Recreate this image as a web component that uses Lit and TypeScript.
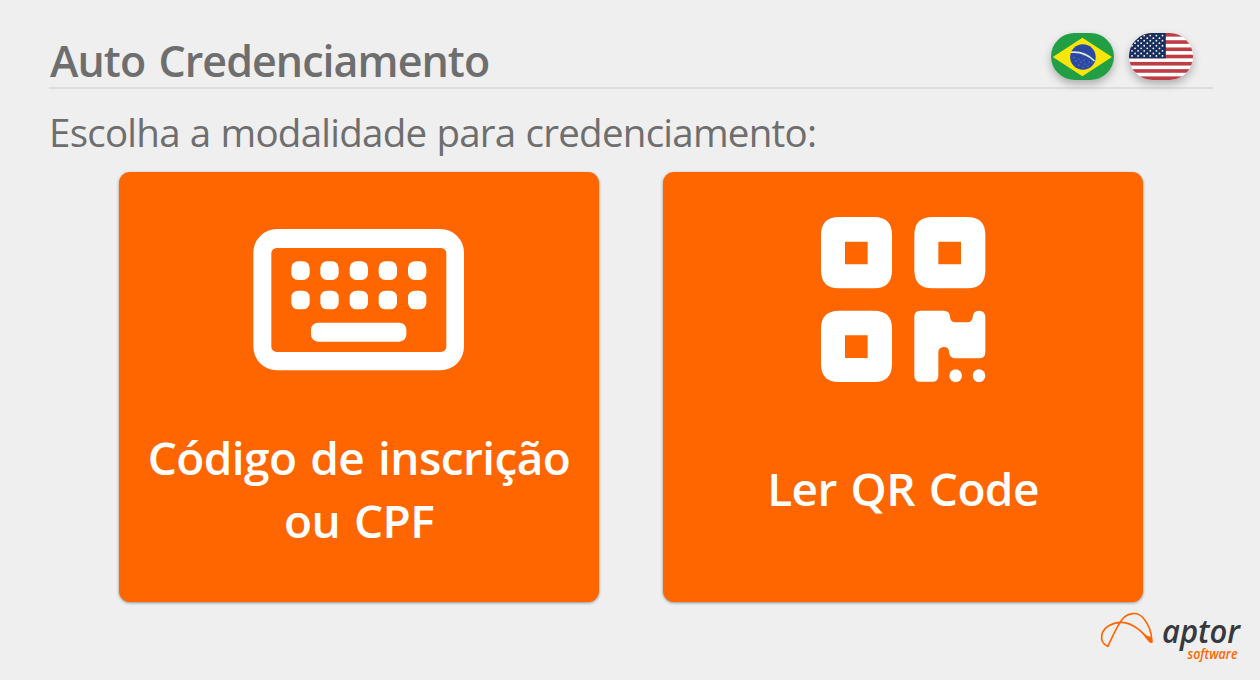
import { LitElement, html, css, svg } from 'lit';
import { customElement, property } from 'lit/decorators.js';

const KEY_COLUMNS = [153, 240, 328, 415, 503];
const KEY_ROWS = [138, 226];

const keyboardIcon = html`
  <svg width="212" height="142" viewBox="38 41 636 426" fill="#fff">
    <path
      fill-rule="evenodd"
      d="M110 41H600A71 71 0 0 1 671 112V394A71 71 0 0 1 600 465H110A71 71 0 0 1 39 394V112A71 71 0 0 1 110 41ZM109 98A16 16 0 0 0 93 114V395A16 16 0 0 0 109 410H602A16 16 0 0 0 618 395V114A16 16 0 0 0 602 98Z"
    />
    ${KEY_ROWS.map((y) =>
      KEY_COLUMNS.map((x) => svg`<rect x=${x} y=${y} width="55" height="56" rx="20" />`)
    )}
    <rect x="212" y="322" width="286" height="57" rx="21" />
  </svg>
`;

const qrIcon = html`
  <svg width="165" height="165" viewBox="33 36 495 495" fill="#fff">
    ${[
      [33, 36],
      [313, 36],
      [33, 317],
    ].map(
      ([x, y]) => svg`<path
        fill-rule="evenodd"
        transform="translate(${x} ${y})"
        d="M54 0H159Q213 0 213 54V160Q213 214 159 214H54Q0 214 0 160V54Q0 0 54 0ZM72 74V142H140V74Z"
      />`
    )}
    <path
      d="M331 317H401Q419 317 420 336Q421 352 437 352H471Q487 352 488 336Q490 317 507 317Q526 318 526 337V441Q526 460 507 460H437Q419 460 417 441Q417 426 401 426Q385 427 385 443V512Q385 530 367 530H331Q313 530 313 512V335Q313 317 331 317Z"
    />
    <circle cx="437" cy="512" r="19" />
    <circle cx="507" cy="512" r="19" />
  </svg>
`;

const brazilFlag = html`
  <svg width="64" height="47" viewBox="0 0 64 47">
    <rect width="64" height="47" fill="#229e45" />
    <path d="M1.8 24L31.4 4.7 61 24 31.4 43.2Z" fill="#f8e509" />
    <circle cx="31.9" cy="24" r="12.8" fill="#2b49a3" />
    <path d="M20 19.3Q33.5 18 43.5 28" fill="none" stroke="#dcebdc" stroke-width="1.6" />
    <g fill="#8fa3d6">
      <circle cx="23" cy="24.5" r=".5" />
      <circle cx="25" cy="28" r=".6" />
      <circle cx="28" cy="26" r=".5" />
      <circle cx="30" cy="29" r=".6" />
      <circle cx="28" cy="32" r=".6" />
      <circle cx="33" cy="27" r=".6" />
      <circle cx="34" cy="31" r=".6" />
      <circle cx="38" cy="29" r=".6" />
      <circle cx="37" cy="33" r=".6" />
      <circle cx="32" cy="34" r=".5" />
      <circle cx="41" cy="30" r=".5" />
      <circle cx="33" cy="22.5" r=".5" />
    </g>
  </svg>
`;

const STRIPE = 47 / 13;

const usaFlag = html`
  <svg width="64" height="47" viewBox="0 0 64 47">
    <rect width="64" height="47" fill="#fff" />
    ${[0, 2, 4, 6, 8, 10, 12].map(
      (i) => svg`<rect y=${i * STRIPE} width="64" height=${STRIPE} fill="#bd3d44" />`
    )}
    <rect width="36.8" height=${STRIPE * 7} fill="#192f5d" />
    ${Array.from({ length: 9 }, (_, row) =>
      Array.from(
        { length: row % 2 ? 5 : 6 },
        (_, col) =>
          svg`<circle cx=${3 + col * 6.1 + (row % 2 ? 3.05 : 0)} cy=${2.6 + row * 2.54} r=".9" fill="#fff" />`
      )
    )}
  </svg>
`;

const aptorLogo = html`
  <svg width="150" height="56" viewBox="1095 608 150 56" role="img" aria-label="aptor software">
    <g fill="none" stroke="#ff6600" stroke-linejoin="round" stroke-linecap="round">
      <path
        stroke-width="1.7"
        d="M1107.8 646.3C1103 644.5 1101 640 1101.8 635C1103.5 627 1113 622 1122 622.3C1134 622.8 1143 633 1151 641.5"
      />
      <path
        stroke-width="1.6"
        d="M1107.8 646.3C1111 640 1116 628 1121 621C1127 612 1138 611 1144 619C1149 625 1151.5 633 1152 641"
      />
    </g>
    <path fill="#ff6600" d="M1139 629.5C1144 634 1148 637 1150.5 636.5L1152.8 642.5Q1151 644 1148.5 641.5Z" />
    <text class="brand" x="1162" y="643" textLength="78" lengthAdjust="spacingAndGlyphs">aptor</text>
    <text class="sub" x="1187.5" y="659.3" textLength="50" lengthAdjust="spacingAndGlyphs">software</text>
  </svg>
`;

/**
 * Large touch tile: icon on top, label below.
 */
@customElement('option-card')
export class OptionCard extends LitElement {
  @property()
  label = '';

  static styles = css`
    :host {
      display: block;
      width: 480px;
      height: 430px;
    }

    .card {
      display: flex;
      flex-direction: column;
      align-items: center;
      width: 100%;
      height: 100%;
      box-sizing: border-box;
      padding: 0 20px;
      border: none;
      border-radius: 11px;
      background: #ff6600;
      box-shadow: 0 1px 3px rgba(0, 0, 0, 0.4);
      color: #fff;
      cursor: pointer;
    }

    .icon {
      display: flex;
      align-items: center;
      justify-content: center;
      height: 255px;
      flex-shrink: 0;
    }

    .label {
      display: flex;
      align-items: center;
      justify-content: center;
      height: 123px;
      font-family: 'Open Sans', 'Noto Sans', sans-serif;
      font-size: 46px;
      font-weight: 600;
      line-height: 63px;
      letter-spacing: -0.6px;
      word-spacing: 2.5px;
      text-align: center;
    }
  `;

  render() {
    return html`
      <button class="card" @click=${this.choose}>
        <span class="icon"><slot></slot></span>
        <span class="label">${this.label}</span>
      </button>
    `;
  }

  private choose() {
    this.dispatchEvent(
      new CustomEvent('option-select', {
        detail: { label: this.label },
        bubbles: true,
        composed: true,
      })
    );
  }
}

@customElement('app-root')
export class AppRoot extends LitElement {
  static styles = css`
    :host {
      display: block;
      height: 680px;
      overflow: hidden;
      background: #efefef;
      color: #6e6e6e;
      font-family: 'Open Sans', 'Noto Sans', sans-serif;
    }

    .page {
      display: flex;
      flex-direction: column;
      height: 100%;
    }

    svg {
      display: block;
    }

    .header {
      display: flex;
      justify-content: space-between;
      align-items: flex-start;
      box-sizing: border-box;
      height: 89px;
      margin: 0 47px 0 49px;
      padding-right: 20px;
      border-bottom: 2px solid #dddddd;
    }

    .title {
      margin: 31px 0 0 1px;
      font-size: 43px;
      font-weight: 600;
      line-height: 60px;
      letter-spacing: -0.95px;
      word-spacing: 3px;
      white-space: nowrap;
    }

    .flags {
      display: flex;
      gap: 15px;
      padding-top: 33px;
    }

    .flag {
      width: 64px;
      height: 47px;
      padding: 0;
      border: none;
      border-radius: 24px;
      overflow: hidden;
      box-shadow: 0 4px 8px rgba(0, 0, 0, 0.28);
      cursor: pointer;
    }

    .flag:first-child {
      width: 63px;
    }

    .prompt {
      margin: 15px 0 0 49px;
      height: 68px;
      font-size: 38.5px;
      font-weight: 400;
      line-height: 56px;
      letter-spacing: -0.75px;
      word-spacing: 0.8px;
      white-space: nowrap;
    }

    .options {
      display: flex;
      gap: 64px;
      padding-left: 119px;
    }

    .footer {
      display: flex;
      justify-content: flex-end;
      padding: 6px 15px 0 0;
    }

    .brand {
      font-family: 'Open Sans', sans-serif;
      font-size: 33px;
      font-style: italic;
      font-weight: 600;
      fill: #36393d;
    }

    .sub {
      font-family: 'Open Sans', sans-serif;
      font-size: 14.5px;
      font-style: italic;
      font-weight: 600;
      fill: #ff6600;
    }
  `;

  render() {
    return html`
      <main class="page">
        <header class="header">
          <h1 class="title">Auto Credenciamento</h1>
          <div class="flags">
            <button class="flag" aria-label="Português">${brazilFlag}</button>
            <button class="flag" aria-label="English">${usaFlag}</button>
          </div>
        </header>
        <p class="prompt">Escolha a modalidade para credenciamento:</p>
        <section class="options">
          <option-card label="Código de inscrição ou CPF">${keyboardIcon}</option-card>
          <option-card label="Ler QR Code">${qrIcon}</option-card>
        </section>
        <footer class="footer">${aptorLogo}</footer>
      </main>
    `;
  }
}

declare global {
  interface HTMLElementTagNameMap {
    'option-card': OptionCard;
    'app-root': AppRoot;
  }
}
